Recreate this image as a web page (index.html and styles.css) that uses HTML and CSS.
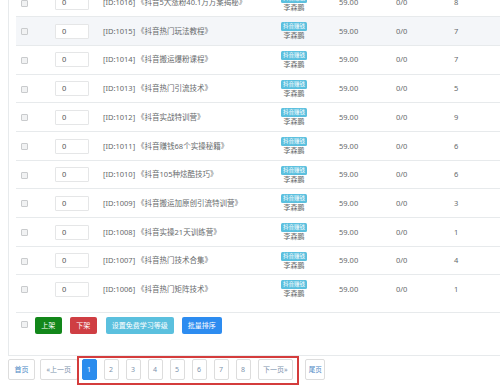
FILE: index.html
```html
<!DOCTYPE html>
<html lang="zh-CN">
<head>
  <meta charset="UTF-8">
  <title>课程列表</title>
  <link rel="stylesheet" href="styles.css">
</head>
<body>
  <div class="panel">
    <table class="goods">
      <colgroup>
        <col class="c-check">
        <col class="c-sort">
        <col class="c-title">
        <col class="c-cat">
        <col class="c-price">
        <col class="c-sale">
        <col class="c-num">
      </colgroup>
      <tbody>
        <tr>
          <td><span class="check"></span></td>
          <td><span class="sort-input">0</span></td>
          <td>[ID:1016] 《抖音5大涨粉40.1万方案揭秘》</td>
          <td class="cat"><span class="tag">抖音赚钱</span><span class="name">李森鹏</span></td>
          <td class="pad">59.00</td>
          <td class="pad">0/0</td>
          <td class="pad">8</td>
        </tr>
        <tr class="hover">
          <td><span class="check"></span></td>
          <td><span class="sort-input">0</span></td>
          <td>[ID:1015] 《抖音热门玩法教程》</td>
          <td class="cat"><span class="tag">抖音赚钱</span><span class="name">李森鹏</span></td>
          <td class="pad">59.00</td>
          <td class="pad">0/0</td>
          <td class="pad">7</td>
        </tr>
        <tr>
          <td><span class="check"></span></td>
          <td><span class="sort-input">0</span></td>
          <td>[ID:1014] 《抖音搬运爆粉课程》</td>
          <td class="cat"><span class="tag">抖音赚钱</span><span class="name">李森鹏</span></td>
          <td class="pad">59.00</td>
          <td class="pad">0/0</td>
          <td class="pad">7</td>
        </tr>
        <tr>
          <td><span class="check"></span></td>
          <td><span class="sort-input">0</span></td>
          <td>[ID:1013] 《抖音热门引流技术》</td>
          <td class="cat"><span class="tag">抖音赚钱</span><span class="name">李森鹏</span></td>
          <td class="pad">59.00</td>
          <td class="pad">0/0</td>
          <td class="pad">5</td>
        </tr>
        <tr>
          <td><span class="check"></span></td>
          <td><span class="sort-input">0</span></td>
          <td>[ID:1012] 《抖音实战特训营》</td>
          <td class="cat"><span class="tag">抖音赚钱</span><span class="name">李森鹏</span></td>
          <td class="pad">59.00</td>
          <td class="pad">0/0</td>
          <td class="pad">9</td>
        </tr>
        <tr>
          <td><span class="check"></span></td>
          <td><span class="sort-input">0</span></td>
          <td>[ID:1011] 《抖音赚钱68个实操秘籍》</td>
          <td class="cat"><span class="tag">抖音赚钱</span><span class="name">李森鹏</span></td>
          <td class="pad">59.00</td>
          <td class="pad">0/0</td>
          <td class="pad">6</td>
        </tr>
        <tr>
          <td><span class="check"></span></td>
          <td><span class="sort-input">0</span></td>
          <td>[ID:1010] 《抖音105种炫酷技巧》</td>
          <td class="cat"><span class="tag">抖音赚钱</span><span class="name">李森鹏</span></td>
          <td class="pad">59.00</td>
          <td class="pad">0/0</td>
          <td class="pad">6</td>
        </tr>
        <tr>
          <td><span class="check"></span></td>
          <td><span class="sort-input">0</span></td>
          <td>[ID:1009] 《抖音搬运加原创引流特训营》</td>
          <td class="cat"><span class="tag">抖音赚钱</span><span class="name">李森鹏</span></td>
          <td class="pad">59.00</td>
          <td class="pad">0/0</td>
          <td class="pad">3</td>
        </tr>
        <tr>
          <td><span class="check"></span></td>
          <td><span class="sort-input">0</span></td>
          <td>[ID:1008] 《抖音实操21天训练营》</td>
          <td class="cat"><span class="tag">抖音赚钱</span><span class="name">李森鹏</span></td>
          <td class="pad">59.00</td>
          <td class="pad">0/0</td>
          <td class="pad">1</td>
        </tr>
        <tr>
          <td><span class="check"></span></td>
          <td><span class="sort-input">0</span></td>
          <td>[ID:1007] 《抖音热门技术合集》</td>
          <td class="cat"><span class="tag">抖音赚钱</span><span class="name">李森鹏</span></td>
          <td class="pad">59.00</td>
          <td class="pad">0/0</td>
          <td class="pad">4</td>
        </tr>
        <tr>
          <td><span class="check"></span></td>
          <td><span class="sort-input">0</span></td>
          <td>[ID:1006] 《抖音热门矩阵技术》</td>
          <td class="cat"><span class="tag">抖音赚钱</span><span class="name">李森鹏</span></td>
          <td class="pad">59.00</td>
          <td class="pad">0/0</td>
          <td class="pad">1</td>
        </tr>
      </tbody>
    </table>

    <div class="batch">
      <span class="check"></span>
      <button class="btn btn-green">上架</button>
      <button class="btn btn-red">下架</button>
      <button class="btn btn-teal">设置免费学习等级</button>
      <button class="btn btn-blue">批量排序</button>
    </div>
  </div>

  <div class="pager">
    <a class="page link">首页</a>
    <a class="page">«上一页</a>
    <div class="mark">
      <a class="page num active">1</a>
      <a class="page num">2</a>
      <a class="page num">3</a>
      <a class="page num">4</a>
      <a class="page num">5</a>
      <a class="page num">6</a>
      <a class="page num">7</a>
      <a class="page num">8</a>
      <a class="page next">下一页»</a>
    </div>
    <a class="page link last">尾页</a>
  </div>
</body>
</html>
```

FILE: styles.css
```css
body {
  margin: 0;
  background: #fff;
  color: #676a6c;
  font-family: "Noto Sans", "Noto Sans CJK SC", sans-serif;
  font-size: 7.5px;
  height: 390px;
  overflow: hidden;
}

.panel {
  width: 540px;
  margin: -12.4px 0 0 8px;
  padding: 0 7px 21.5px;
  border: 1px solid #e7eaec;
  background: #fff;
}

.goods {
  width: 520px;
  table-layout: fixed;
  border-collapse: collapse;
}

.c-check { width: 39px; }
.c-sort { width: 48px; }
.c-title { width: 153px; }
.c-cat { width: 76px; }
.c-price { width: 57px; }
.c-sale { width: 58px; }
.c-num { width: 89px; }

.goods td {
  padding: 5px 0 4.7px;
  border-top: 1px solid #e7eaec;
  vertical-align: middle;
  line-height: 9px;
  white-space: nowrap;
}

.goods tr:first-child td {
  border-top: none;
}

.goods tr.hover td {
  background: #f4f6f9;
}

.goods td.pad {
  padding-left: 7px;
}

.check {
  display: inline-block;
  width: 5px;
  height: 5px;
  margin-left: 4.7px;
  border: 1px solid #c9cbcd;
  border-radius: 1px;
  background: #f1f2f3;
  vertical-align: middle;
}

.sort-input {
  display: block;
  width: 34px;
  height: 15px;
  box-sizing: border-box;
  padding-left: 6px;
  border: 1px solid #e5e6e7;
  border-radius: 1px;
  background: #fff;
  line-height: 13px;
  color: #555;
}

.cat {
  text-align: center;
}

.tag {
  display: block;
  width: 26px;
  height: 9px;
  margin: 0 auto;
  border-radius: 1.5px;
  background: #5bc0de;
  color: #fff;
  font-size: 5.5px;
  line-height: 9px;
}

.name {
  display: block;
  font-size: 7px;
  line-height: 9px;
}

.batch {
  display: flex;
  align-items: center;
  margin-top: 9.3px;
  padding: 3.5px 0 0;
  border-top: 1px solid #e7eaec;
}

.batch .check {
  margin-right: 7px;
  position: relative;
  top: -1px;
}

.btn {
  height: 17px;
  margin-right: 8px;
  padding: 0 6.5px;
  border: none;
  border-radius: 2px;
  color: #fff;
  font-family: inherit;
  font-size: 7px;
  line-height: 17px;
  cursor: pointer;
}

.btn-green { background: #12871a; }
.btn-red { background: #cf3e43; margin-right: 9px; }
.btn-teal { background: #5bc0de; padding: 0 6px; }
.btn-blue { background: #2d8cf0; padding: 0 6px; }

.pager {
  display: flex;
  align-items: flex-start;
  margin-left: 8px;
}

.page {
  display: block;
  height: 21px;
  box-sizing: border-box;
  margin-top: 2.7px;
  padding: 0 5.5px;
  border: 1px solid #dddddd;
  border-radius: 2px;
  background: #fff;
  color: #7d93ad;
  font-size: 7px;
  line-height: 19px;
  text-align: center;
  cursor: pointer;
}

.page + .page {
  margin-left: 5px;
}

.page.link {
  color: #4a85c4;
}

.page.last {
  margin-left: 6px;
  padding: 0 2.5px;
  font-size: 6.5px;
}

.mark {
  display: flex;
  margin-left: -1px;
  padding: 1px 4px 3px 3px;
  border: 2px solid #d43c3c;
}

.mark .page {
  margin-top: 0;
}

.mark .page + .page {
  margin-left: 7px;
}

.page.num {
  width: 15px;
  padding: 0;
}

.page.next {
  padding: 0 4.5px;
}

.page.active {
  background: #2b8ced;
  border-color: #2b8ced;
  color: #fff;
}
```
